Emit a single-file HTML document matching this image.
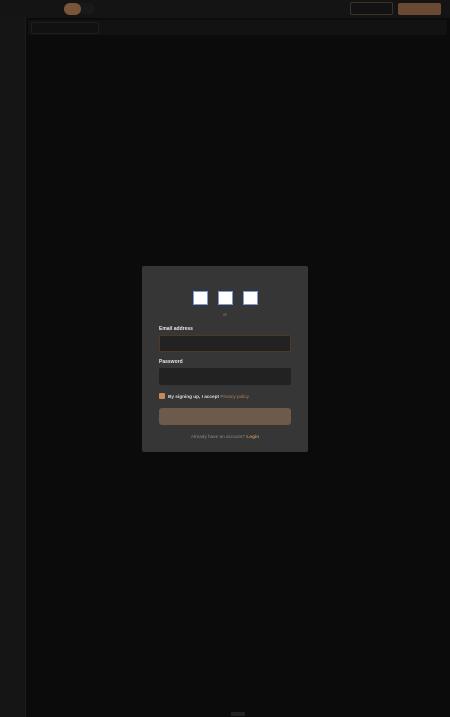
<!DOCTYPE html>
<html><head><meta charset="utf-8"><style>
*{box-sizing:border-box;margin:0;padding:0}
body{width:450px;height:717px;background:#0b0b0b;font-family:"Liberation Sans",sans-serif;position:relative;overflow:hidden}
.top{position:absolute;left:0;top:0;width:450px;height:18px;background:#141414}
.side{position:absolute;left:0;top:18px;width:26px;height:699px;background:#151515;border-right:1px solid #1c1c1c}
.bar{position:absolute;left:28px;top:20px;width:419px;height:15px;background:#121212}
.search{position:absolute;left:31px;top:22px;width:68px;height:12px;border:1px solid #1e1e1e;border-radius:2px;background:#111}
.tog{position:absolute;left:66px;top:3px;width:29px;height:11px;border-radius:6px;background:#191919}
.knob{position:absolute;left:64px;top:3px;width:17px;height:12px;border-radius:6px;background:#7a5538}
.b1{position:absolute;left:350px;top:2px;width:43px;height:13px;border:1px solid #3a3226;border-radius:2px;background:#131313}
.b2{position:absolute;left:398px;top:3px;width:43px;height:12px;border-radius:2px;background:#6b4a33}
.card{position:absolute;left:142px;top:266px;width:166px;height:186px;background:#363636;border-radius:2px}
.sq{position:absolute;top:25px;width:15px;height:14px;background:#fff;border:1px solid #7a9ad6}
.or{position:absolute;left:0;width:166px;top:46px;text-align:center;color:#8a8a8a;font-size:4.5px}
.lbl{position:absolute;left:17px;color:#e6e6e6;font-size:5px;font-weight:bold}
.inp{position:absolute;left:17px;width:132px;height:17px;background:#222;border-radius:2px}
.chk{position:absolute;left:17px;top:127px;width:6px;height:6px;background:#c08a5c;border-radius:1px}
.ct{position:absolute;left:26px;top:127.5px;font-size:4.7px;color:#ddd;white-space:nowrap;font-weight:bold}
.btn{position:absolute;left:17px;top:142px;width:132px;height:17px;background:#6e5a4b;border-radius:3px}
.al{position:absolute;left:0;width:166px;top:167.5px;text-align:center;font-size:4.7px;color:#888}
.hb{position:absolute;left:231px;top:712px;width:14px;height:4px;background:#222}
</style></head><body>
<div class="top"></div>
<div class="tog"></div><div class="knob"></div>
<div class="b1"></div><div class="b2"></div>
<div class="side"></div>
<div class="bar"></div><div class="search"></div>
<div class="card">
<div class="sq" style="left:51px"></div>
<div class="sq" style="left:76px"></div>
<div class="sq" style="left:101px"></div>
<div class="or">or</div>
<div class="lbl" style="top:59.5px">Email address</div>
<div class="inp" style="top:69px;border:1px solid #4a3a2c"></div>
<div class="lbl" style="top:92.5px">Password</div>
<div class="inp" style="top:102px"></div>
<div class="chk"></div>
<div class="ct">By signing up, I accept <span style="color:#b08058;font-weight:normal">Privacy policy</span></div>
<div class="btn"></div>
<div class="al">Already have an account? <span style="color:#c08a5c;font-weight:bold">Login</span></div>
</div>
<div class="hb"></div>
</body></html>
